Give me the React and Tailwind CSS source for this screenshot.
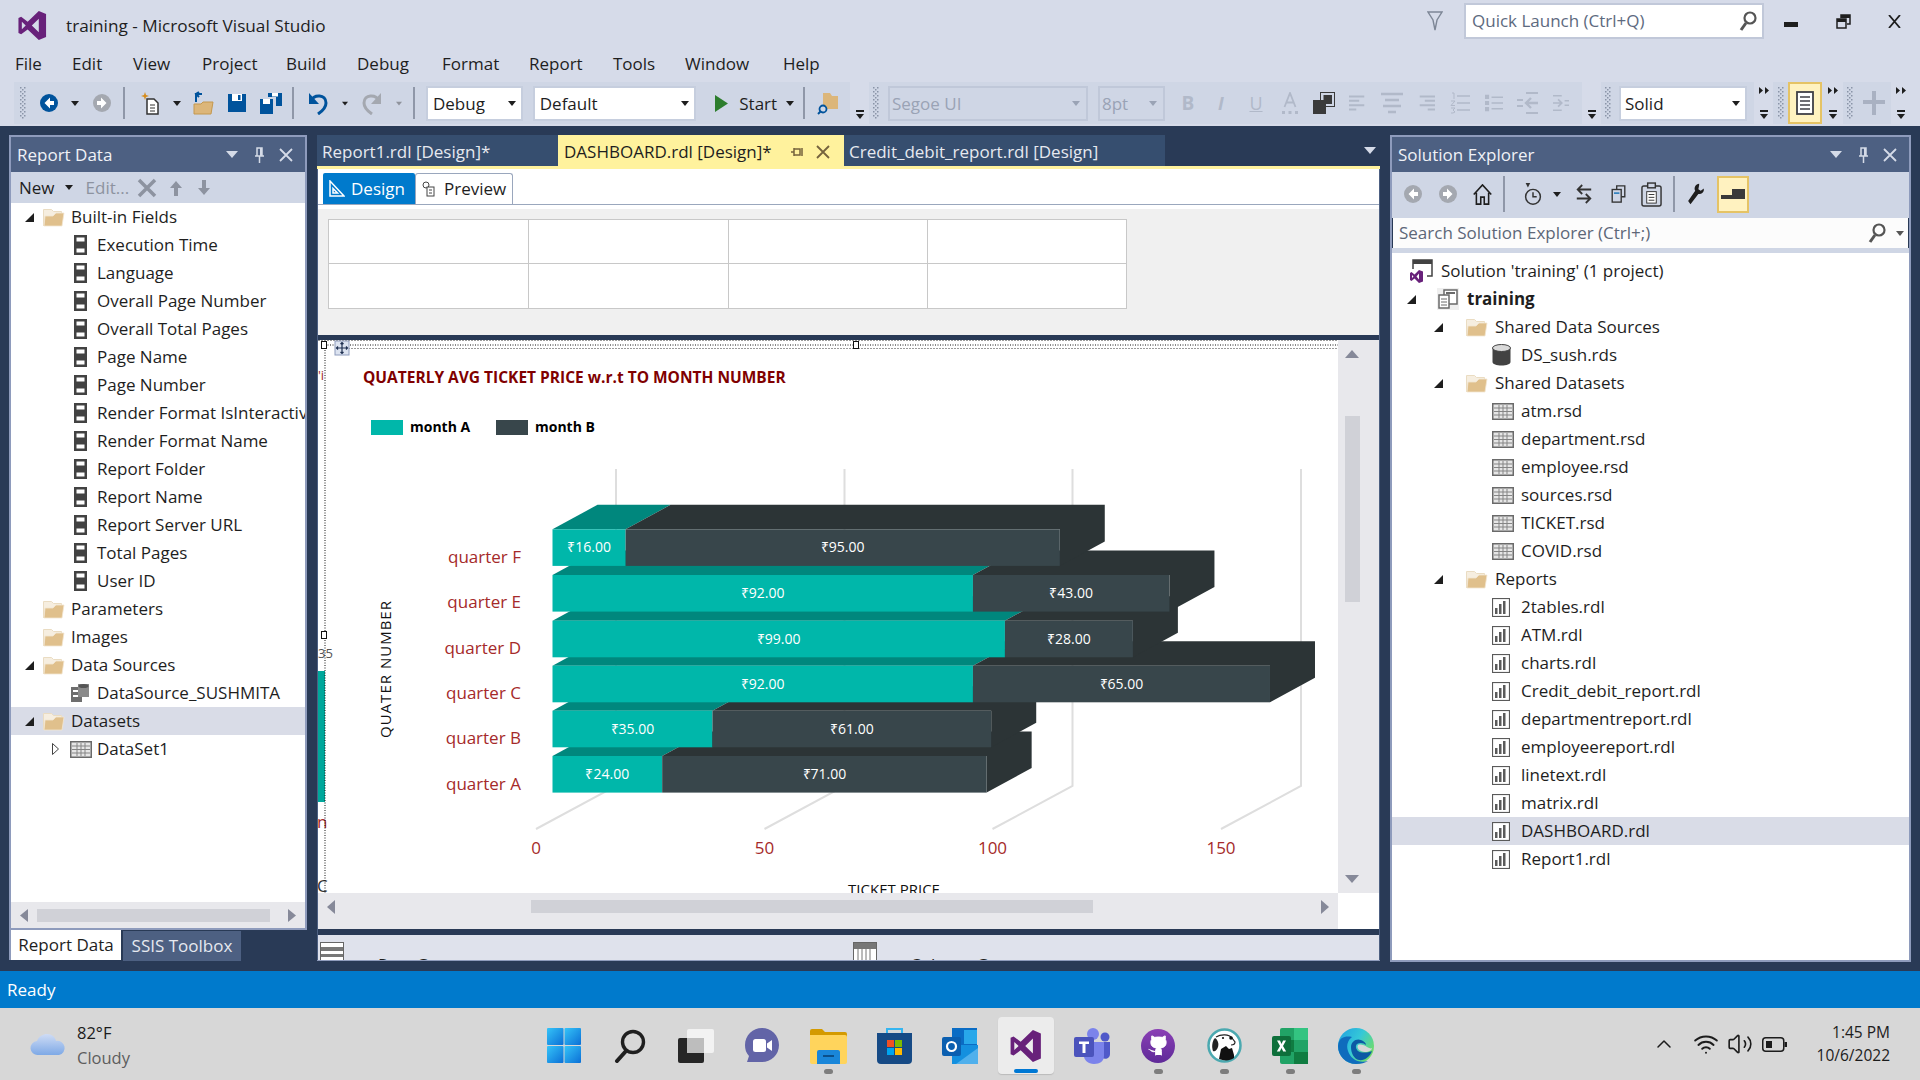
import React from 'react';
import { Github, Wifi, ChevronUp, Volume2 } from 'lucide-react';

const Caret = ({ className = 'text-[#1e1e1e]' }) => (
  <svg width="8" height="5" viewBox="0 0 8 5" className={className}><path d="M0 0h8L4 5z" fill="currentColor" /></svg>
);

const VsLogo = ({ size = 31, color = '#68217a' }) => (
  <svg width={size} height={size} viewBox="0 0 32 32">
    <path fillRule="evenodd" fill={color} d="M22.5 1 30 4.2v23.6L22.5 31 11 20l-6.7 5L1.5 23.8V8.2L4.3 7 11 12zM22.5 9 15.3 16l7.2 7zM5 12.2v7.6L9 16z" />
  </svg>
);

const Grip = () => (
  <svg width="6" height="32" viewBox="0 0 6 32"><g fill="#8a94a8">{[0, 4, 8, 12, 16, 20, 24, 28].map((y) => (<g key={y}><rect x="0" y={y} width="1.5" height="1.5" /><rect x="4" y={y} width="1.5" height="1.5" /><rect x="2" y={y + 2} width="1.5" height="1.5" /></g>))}</g></svg>
);

const Sep = ({ className = 'h-[32px]' }) => <div className={`w-[2px] bg-[#8f97a8] ${className}`} />;

const Overflow = ({ arrows, className }) => (
  <div className={`flex flex-col items-center justify-between py-[5px] h-full ${className}`}>
    {arrows ? (
      <svg width="10" height="7" viewBox="0 0 10 7"><path d="M0 0l4 3.500L0 7zM6 0l4 3.500L6 7z" fill="#1e1e1e" /></svg>
    ) : <span className="h-[7px]" />}
    <span className="flex flex-col items-center gap-[2px]">
      <span className="w-[8px] h-[2px] bg-[#1e1e1e]" />
      <Caret className="text-[#1e1e1e]" />
    </span>
  </div>
);

const CircleArrow = ({ color, dir = 'left' }) => (
  <svg width="20" height="20" viewBox="0 0 20 20"><circle cx="10" cy="10" r="9" fill={color} /><path d={dir === 'left' ? 'M11 4.5 5.5 10l5.5 5.5V12h4V8h-4z' : 'M9 4.5 14.5 10 9 15.5V12H5V8h4z'} fill="#fff" /></svg>
);

const Folder = () => (
  <svg width="23" height="20" viewBox="0 0 23 20">
    <path d="M1.500 19V2.500h8l2 2h8V8" fill="#f6eee0" stroke="#eadcc2" />
    <path d="M2 19 3 9h8l3-3h8l-2 13z" fill="#e0c08c" stroke="#f2e6d2" strokeWidth=".8" />
  </svg>
);

const FieldIcon = () => (
  <svg width="13" height="20" viewBox="0 0 13 20"><rect width="13" height="20" fill="#424242" /><rect x="2.500" y="2.500" width="8" height="4" fill="#fff" /><rect x="2.500" y="13.500" width="8" height="4" fill="#fff" /></svg>
);

const DataSourceIcon = () => (
  <svg width="20" height="20" viewBox="0 0 20 20"><rect x="1" y="4" width="11" height="15" fill="#6e6e6e" /><rect x="3" y="7" width="7" height="2" fill="#fff" /><rect x="3" y="12" width="7" height="2" fill="#fff" /><rect x="8" y="1" width="11" height="13" fill="#8a8a8a" /><ellipse cx="13.500" cy="3" rx="5" ry="2" fill="#555" /></svg>
);

const GridIcon = () => (
  <svg width="22" height="17" viewBox="0 0 22 17"><rect x=".75" y=".75" width="20.500" height="15.500" fill="#e6e6e6" stroke="#6a6a6a" strokeWidth="1.500" /><path d="M2 5h18M2 8.500h18M2 12h18M7 2v13M11 2v13M15 2v13" stroke="#858585" /></svg>
);

const ReportIcon = () => (
  <svg width="18" height="19" viewBox="0 0 18 19"><rect x=".5" y=".5" width="17" height="18" fill="#fff" stroke="#5a5a5a" strokeWidth="1.200" /><rect x="3" y="10" width="2.500" height="6" fill="#5a5a5a" /><rect x="7" y="6" width="2.500" height="10" fill="#5a5a5a" /><rect x="11" y="3" width="2.500" height="13" fill="#5a5a5a" /></svg>
);

const CylinderIcon = () => (
  <svg width="19" height="22" viewBox="0 0 19 22"><path d="M.5 4v14c0 2 4 3.500 9 3.500s9-1.500 9-3.500V4z" fill="#424242" /><ellipse cx="9.500" cy="4" rx="9" ry="3.500" fill="#d9d9d9" stroke="#424242" /></svg>
);

const SolutionIcon = () => (
  <svg width="23" height="24" viewBox="0 0 23 24"><path d="M3 10V1h19v16h-5" fill="#fff" stroke="#424242" strokeWidth="1.500" /><rect x="3" y="1" width="19" height="4" fill="#424242" /><g transform="translate(0 11)"><path fillRule="evenodd" fill="#68217a" d="M9 0l4 1.500v10L9 13 4.500 8.500 1.500 11 0 10V3l1.500-1 3 2.500zM9 3.500 6.500 6.500 9 9.500zM2 5v3l1.500-1.500z" /></g></svg>
);

const ProjectIcon = () => (
  <svg width="22" height="22" viewBox="0 0 22 22"><rect width="22" height="22" fill="#efefef" /><rect x="7" y="2" width="13" height="14" fill="#fff" stroke="#6a6a6a" strokeWidth="1.500" /><path d="M9 5h9" stroke="#6a6a6a" strokeWidth="2" /><rect x="2" y="7" width="10" height="13" fill="#fff" stroke="#6a6a6a" strokeWidth="1.500" /><path d="M4 11h6M4 14h6M4 17h6" stroke="#6a6a6a" /></svg>
);

const Arrow = ({ open = true }) => open ? (
  <svg width="9" height="9" viewBox="0 0 9 9"><path d="M0 9h9V0z" fill="#1e1e1e" /></svg>
) : (
  <svg width="7" height="12" viewBox="0 0 7 12"><path d="M.5.500 6.500 6 .5 11.500z" fill="#fff" stroke="#444" /></svg>
);

const ROW_STYLES = {
  lFolderArrow: ['pl-[14px]', 'w-[17px]', 'w-[29px]'],
  lFolder: ['pl-[31px]', '', 'w-[29px]'],
  lField: ['pl-[63px]', '', 'w-[23px]'],
  lSource: ['pl-[59px]', '', 'w-[27px]'],
  lSet: ['pl-[41px]', 'w-[18px]', 'w-[27px]'],
  rSolution: ['pl-[18px]', '', 'w-[31px]'],
  rProject: ['pl-[15px]', 'w-[30px]', 'w-[30px]'],
  rFolder: ['pl-[42px]', 'w-[31px]', 'w-[30px]'],
  rItem: ['pl-[100px]', '', 'w-[29px]'],
};

const TreeRow = ({ kind, icon, text, selected, arrow, bold }) => {
  const [pad, arrowW, iconW] = ROW_STYLES[kind];
  return (
    <div className={`h-[28px] flex items-center whitespace-nowrap overflow-hidden ${pad} ${selected ? 'bg-[#d9dce7]' : ''}`}>
      {arrowW && <span className={`${arrowW} shrink-0 flex`}>{arrow}</span>}
      <span className={`${iconW} shrink-0 flex items-center`}>{icon}</span>
      <span className={bold ? 'font-bold' : ''}>{text}</span>
    </div>
  );
};

const builtIn = ['Execution Time', 'Language', 'Overall Page Number', 'Overall Total Pages', 'Page Name', 'Page Number', 'Render Format IsInteractive', 'Render Format Name', 'Report Folder', 'Report Name', 'Report Server URL', 'Total Pages', 'User ID'];
const rsds = ['atm.rsd', 'department.rsd', 'employee.rsd', 'sources.rsd', 'TICKET.rsd', 'COVID.rsd'];
const rdls = ['2tables.rdl', 'ATM.rdl', 'charts.rdl', 'Credit_debit_report.rdl', 'departmentreport.rdl', 'employeereport.rdl', 'linetext.rdl', 'matrix.rdl', 'DASHBOARD.rdl', 'Report1.rdl'];

const PanelTitle = ({ title }) => (
  <div className="h-[35px] bg-[#4d6082] flex items-center text-[#f0f2f7] text-[17px] pl-[6px] pr-[12px] shrink-0">
    <span className="flex-1">{title}</span>
    <svg width="12" height="7" viewBox="0 0 12 7" className="mr-[16px]"><path d="M0 0h12L6 7z" fill="#d5dbe8" /></svg>
    <svg width="11" height="16" viewBox="0 0 11 16"><path d="M3 1h5v8H3zM1 9h9M5.500 9v7" fill="none" stroke="#d5dbe8" strokeWidth="1.500" /><rect x="6" y="1" width="2" height="8" fill="#d5dbe8" /></svg>
    <svg width="14" height="14" viewBox="0 0 14 14" className="ml-[14px]"><path d="M1 1l12 12M13 1 1 13" stroke="#d5dbe8" strokeWidth="1.800" /></svg>
  </div>
);

const DIS = '#b1b9c9';
const AlignIcon = ({ d }) => (
  <svg width="22" height="22" viewBox="0 0 22 22"><path d={d} stroke={DIS} strokeWidth="2.600" fill="none" /></svg>
);

const Toolbar = () => (
  <div className="h-[42px] flex items-stretch pl-[14px] text-[17px] text-[#1e1e1e]">
    <div className="w-[836px] bg-[#cfd6e5] flex items-center shrink-0">
      <div className="w-[18px] flex justify-center"><Grip /></div>
      <div className="w-[34px] flex justify-center"><CircleArrow color="#00539c" /></div>
      <div className="w-[18px] flex justify-center"><Caret /></div>
      <div className="w-[36px] flex justify-center"><CircleArrow color="#a4a8b0" dir="right" /></div>
      <div className="w-[8px] flex justify-center"><Sep /></div>
      <div className="w-[44px] flex justify-center">
        <svg width="20" height="24" viewBox="0 0 20 24"><path d="M5 1l1 3 3 1-3 1-1 3-1-3-3-1 3-1z" fill="#d68b1a" /><path d="M7 8h7l4 4v11H7z" fill="#fff" stroke="#333" strokeWidth="1.500" /><path d="M10 14h5M10 17h5M10 20h5" stroke="#333" /></svg>
      </div>
      <div className="w-[10px] flex justify-center"><Caret /></div>
      <div className="w-[44px] flex justify-center">
        <svg width="24" height="24" viewBox="0 0 24 24"><path d="M2 13h7l2-2h10l-2 12H2z" fill="#dcb67a" stroke="#c4984f" /><path d="M4 11V3h6M7 1 4 3l3 3" fill="none" stroke="#00539c" strokeWidth="2" /></svg>
      </div>
      <div className="w-[24px] flex justify-center">
        <svg width="20" height="20" viewBox="0 0 20 20"><path d="M1 1h18v18H1z" fill="#00539c" /><rect x="5" y="1" width="10" height="7" fill="#fff" /><rect x="11" y="2" width="2.500" height="5" fill="#00539c" /></svg>
      </div>
      <div className="w-[43px] flex justify-center">
        <svg width="24" height="22" viewBox="0 0 24 22"><path d="M1 7h13v15H1z" fill="#00539c" /><rect x="4" y="7" width="7" height="5" fill="#fff" /><path d="M9 1h14v13h-6V5H9z" fill="#00539c" /><rect x="13" y="1" width="6" height="3.500" fill="#fff" /></svg>
      </div>
      <div className="w-[2px] flex justify-center"><Sep /></div>
      <div className="w-[48px] flex justify-center">
        <svg width="20" height="24" viewBox="0 0 20 24"><path d="M3 10c3-7 15-7 15 2 0 5-5 9-8 11" fill="none" stroke="#00539c" strokeWidth="3" /><path d="M1 2v11h10z" fill="#00539c" /></svg>
      </div>
      <div className="w-[6px] flex justify-center"><Caret /></div>
      <div className="w-[48px] flex justify-center">
        <svg width="20" height="24" viewBox="0 0 20 24"><path d="M17 10C14 3 2 3 2 12c0 5 5 9 8 11" fill="none" stroke="#a4a8b0" strokeWidth="3" /><path d="M19 2v11H9z" fill="#a4a8b0" /></svg>
      </div>
      <div className="w-[6px] flex justify-center"><Caret className="text-[#8f939c]" /></div>
      <div className="w-[11px]" /><Sep /><div className="w-[11px]" />
      <div className="w-[97px] h-[35px] bg-white border-2 border-[#c6cede] flex items-center pl-[5px] pr-[5px] justify-between"><span className="pt-[2px]">Debug</span><Caret /></div>
      <div className="w-[10px]" />
      <div className="w-[164px] h-[35px] bg-white border-2 border-[#c6cede] flex items-center pl-[5px] pr-[5px] justify-between"><span className="pt-[2px]">Default</span><Caret /></div>
      <div className="w-[19px]" />
      <svg width="13" height="17" viewBox="0 0 13 17"><path d="M0 0l13 8.500L0 17z" fill="#2d7d2d" /></svg>
      <div className="w-[11px]" />
      <span className="w-[45px] pt-[2px]">Start</span>
      <div className="w-[12px] flex justify-center"><Caret /></div>
      <div className="w-[7px]" /><Sep />
      <div className="w-[45px] flex justify-center">
        <svg width="22" height="24" viewBox="0 0 22 24"><path d="M6 2h7l2 3h6v13H6z" fill="#dcb67a" /><circle cx="6" cy="18" r="3.500" fill="#cfd6e5" stroke="#00539c" strokeWidth="1.800" /><path d="M3.500 20.500 1 23" stroke="#00539c" strokeWidth="2" /></svg>
      </div>
    </div>
    <div className="w-[19px] shrink-0"><Overflow /></div>
    <div className="w-[713px] bg-[#cfd6e5] flex items-center shrink-0 text-[#9aa3b5]">
      <div className="w-[14px] flex justify-center"><Grip /></div>
      <div className="w-[5px]" />
      <div className="w-[200px] h-[35px] border-2 border-[#c0c8d9] flex items-center pl-[2px] pr-[6px] justify-between"><span className="pt-[2px]">Segoe UI</span><Caret className="text-[#9aa3b5]" /></div>
      <div className="w-[10px]" />
      <div className="w-[67px] h-[35px] border-2 border-[#c0c8d9] flex items-center pl-[2px] pr-[6px] justify-between"><span className="pt-[2px]">8pt</span><Caret className="text-[#9aa3b5]" /></div>
      <div className="w-[46px] text-center font-bold text-[19px] text-[#b1b9c9]">B</div>
      <div className="w-[20px] text-center italic font-bold text-[18px] text-[#b1b9c9]">I</div>
      <div className="w-[50px] text-center underline text-[18px] text-[#b1b9c9]">U</div>
      <div className="w-[18px] flex justify-center">
        <svg width="18" height="22" viewBox="0 0 18 22"><path d="M3.500 15 9 1l5.500 14M5.500 10.500h7" fill="none" stroke={DIS} strokeWidth="1.800" /><path d="M1 19h3v3H1zM7.500 19h3v3h-3zM14 19h3v3h-3z" fill={DIS} /></svg>
      </div>
      <div className="w-[50px] flex justify-center">
        <svg width="22" height="22" viewBox="0 0 22 22"><rect y="8" width="13" height="14" fill="#3a3a3a" /><rect x="7.500" y=".5" width="14" height="14" fill="#cfd6e5" stroke="#3a3a3a" /><rect x="10.500" y="3" width="8.500" height="9" fill="#3a3a3a" /><rect y="8" width="13" height="14" fill="#3a3a3a" /></svg>
      </div>
      <div className="w-[16px] flex justify-center"><AlignIcon d="M0 2h21M0 8h14M0 14h21M0 20h10" /></div>
      <div className="w-[54px] flex justify-center"><AlignIcon d="M0 2h22M4 8h14M2 14h18M7 20h8" /></div>
      <div className="w-[16px] flex justify-center"><AlignIcon d="M1 2h21M8 8h14M1 14h21M12 20h10" /></div>
      <div className="w-[50px] flex justify-center">
        <svg width="20" height="22" viewBox="0 0 20 22"><path d="M7 4h13M7 11h13M7 18h13" stroke={DIS} strokeWidth="1.600" /><path d="M2 1h2v6M1 9h4l-4 4.500h4M1 16h4l-2 2 2 2-2 1H1" fill="none" stroke={DIS} strokeWidth="1" /></svg>
      </div>
      <div className="w-[18px] flex justify-center">
        <svg width="22" height="22" viewBox="0 0 22 22"><path d="M8 4h14M8 11h14M8 18h14" stroke={DIS} strokeWidth="1.600" /><path d="M0 1h5v5H0zM0 8.500h5v5H0zM0 16h5v5H0z" fill={DIS} /></svg>
      </div>
      <div className="w-[50px] flex justify-center">
        <svg width="22" height="22" viewBox="0 0 22 22"><path d="M9 1h12M0 8h6M0 14h6M9 21h12" stroke={DIS} strokeWidth="2" /><path d="M21 11H9M14 6l-5 5 5 5" fill="none" stroke={DIS} strokeWidth="2.400" /></svg>
      </div>
      <div className="w-[16px] flex justify-center">
        <svg width="22" height="22" viewBox="0 0 22 22"><path d="M0 1h12M16 8h6M16 14h6M0 21h12" stroke={DIS} strokeWidth="2" /><path d="M0 11h12M7 6l5 5-5 5" fill="none" stroke={DIS} strokeWidth="2.400" /></svg>
      </div>
    </div>
    <div className="w-[19px] shrink-0"><Overflow /></div>
    <div className="w-[153px] bg-[#cfd6e5] flex items-center shrink-0">
      <div className="w-[14px] flex justify-center"><Grip /></div>
      <div className="w-[4px]" />
      <div className="w-[128px] h-[35px] bg-white border-2 border-[#c6cede] flex items-center pl-[4px] pr-[5px] justify-between"><span className="pt-[2px]">Solid</span><Caret /></div>
    </div>
    <div className="w-[19px] shrink-0"><Overflow arrows /></div>
    <div className="w-[15px] bg-[#cfd6e5] flex items-center justify-center"><Grip /></div>
    <div className="w-[34px] bg-[#fff2c0] border-2 border-[#e5c365] flex items-center justify-center">
      <svg width="18" height="24" viewBox="0 0 18 24"><rect x="1" y="1" width="16" height="22" fill="#fff" stroke="#3f3f46" strokeWidth="1.800" /><path d="M4 6h10M4 10h10M4 14h10M4 18h10" stroke="#3f3f46" strokeWidth="1.500" /></svg>
    </div>
    <div className="w-[21px] shrink-0"><Overflow arrows /></div>
    <div className="w-[14px] bg-[#cfd6e5] flex items-center justify-center"><Grip /></div>
    <div className="w-[34px] bg-[#cfd6e5] flex items-center justify-center">
      <svg width="22" height="24" viewBox="0 0 22 24"><path d="M9 0h4v9h9v4h-9v11H9V13H0V9h9z" fill="#a9b1c2" /></svg>
    </div>
    <div className="w-[19px] shrink-0"><Overflow arrows /></div>
  </div>
);

const TitleBar = () => (
  <div className="h-[50px] flex items-start shrink-0 text-[#1e1e1e]">
    <div className="h-[50px] flex items-center pl-[17px]">
      <VsLogo />
      <span className="ml-[18px] text-[17.200px] pt-[2px]">training - Microsoft Visual Studio</span>
    </div>
    <div className="ml-auto h-[42px] flex items-center">
      <svg width="16" height="20" viewBox="0 0 16 20"><path d="M1 1h14l-5 8-2 10-2-10z" fill="none" stroke="#7d8696" strokeWidth="1.400" /></svg>
      <div className="ml-[21px] w-[300px] h-[36px] bg-white border-2 border-[#c1c8d9] flex items-center pl-[6px] pr-[5px] justify-between text-[17px] text-[#5d6a80]">
        <span>Quick Launch (Ctrl+Q)</span>
        <svg width="18" height="20" viewBox="0 0 18 20"><circle cx="11" cy="7" r="5.500" fill="none" stroke="#555" strokeWidth="2.200" /><path d="M7 12l-5 7" stroke="#555" strokeWidth="3" /></svg>
      </div>
      <div className="w-[54px] flex justify-center pt-[6px]"><div className="w-[14px] h-[5px] bg-[#1e1e1e]" /></div>
      <div className="w-[51px] flex justify-center">
        <svg width="15" height="15" viewBox="0 0 15 15"><path d="M5 4V1h9v9h-3" fill="none" stroke="#1e1e1e" strokeWidth="1.500" /><rect x="5" y="1" width="9" height="3" fill="#1e1e1e" /><rect x="1" y="5" width="9" height="9" fill="none" stroke="#1e1e1e" strokeWidth="1.500" /><rect x="1" y="5" width="9" height="3" fill="#1e1e1e" /></svg>
      </div>
      <div className="w-[51px] flex justify-center">
        <svg width="13" height="13" viewBox="0 0 13 13"><path d="M1 0l11 13M12 0 1 13" stroke="#1e1e1e" strokeWidth="1.800" /></svg>
      </div>
    </div>
  </div>
);

const menu = [['File', 'w-[57px]'], ['Edit', 'w-[61px]'], ['View', 'w-[69px]'], ['Project', 'w-[84px]'], ['Build', 'w-[71px]'], ['Debug', 'w-[85px]'], ['Format', 'w-[87px]'], ['Report', 'w-[84px]'], ['Tools', 'w-[72px]'], ['Window', 'w-[98px]'], ['Help', 'w-[60px]']];

const LeftPanel = () => (
  <div className="w-[298px] shrink-0 h-[826px] flex flex-col text-[#1e1e1e]">
    <div className="h-[795px] border-2 border-[#8e9bbc] flex flex-col bg-white overflow-hidden">
      <PanelTitle title="Report Data" />
      <div className="h-[31px] bg-[#cfd6e5] flex items-center pl-[8px] text-[17px] shrink-0">
        <span>New</span>
        <Caret className="ml-[10px] text-[#1e1e1e]" />
        <span className="ml-[13px] text-[#8d93a0]">Edit...</span>
        <svg width="20" height="20" viewBox="0 0 20 20" className="ml-[8px]"><path d="M2 2l16 16M18 2 2 18" stroke="#8d93a0" strokeWidth="3.500" /></svg>
        <svg width="14" height="16" viewBox="0 0 14 16" className="ml-[12px]"><path d="M7 1 1 8h4v8h4V8h4z" fill="#8d93a0" /></svg>
        <svg width="14" height="16" viewBox="0 0 14 16" className="ml-[14px]"><path d="M7 15 1 8h4V0h4v8h4z" fill="#8d93a0" /></svg>
      </div>
      <div className="flex-1 text-[17px] overflow-hidden">
        <TreeRow kind="lFolderArrow" arrow={<Arrow />} icon={<Folder />} text="Built-in Fields" />
        {builtIn.map((t) => <TreeRow key={t} kind="lField" icon={<FieldIcon />} text={t} />)}
        <TreeRow kind="lFolder" icon={<Folder />} text="Parameters" />
        <TreeRow kind="lFolder" icon={<Folder />} text="Images" />
        <TreeRow kind="lFolderArrow" arrow={<Arrow />} icon={<Folder />} text="Data Sources" />
        <TreeRow kind="lSource" icon={<DataSourceIcon />} text="DataSource_SUSHMITA" />
        <TreeRow kind="lFolderArrow" arrow={<Arrow />} icon={<Folder />} text="Datasets" selected />
        <TreeRow kind="lSet" arrow={<Arrow open={false} />} icon={<GridIcon />} text="DataSet1" />
      </div>
      <div className="h-[26px] bg-[#e8e8ec] flex items-center px-[9px] shrink-0">
        <svg width="8" height="13" viewBox="0 0 8 13"><path d="M8 0v13L0 6.500z" fill="#868999" /></svg>
        <div className="ml-[9px] w-[233px] h-[13px] bg-[#d0d1d7]" />
        <svg width="8" height="13" viewBox="0 0 8 13" className="ml-auto"><path d="M0 0v13l8-6.500z" fill="#868999" /></svg>
      </div>
    </div>
    <div className="h-[31px] flex text-[17px]">
      <div className="w-[112px] h-[30px] bg-white flex items-center justify-center border-l-2 border-[#8e9bbc]">Report Data</div>
      <div className="ml-[2px] mt-[1px] w-[118px] h-[30px] bg-[#4d6082] text-[#e6e9f0] flex items-center justify-center">SSIS Toolbox</div>
    </div>
  </div>
);

const rows = [
  { label: 'quarter F', y: 529.3, a: 16, b: 95, ly: 563 },
  { label: 'quarter E', y: 575, a: 92, b: 43, ly: 608 },
  { label: 'quarter D', y: 620.7, a: 99, b: 28, ly: 654 },
  { label: 'quarter C', y: 665.7, a: 92, b: 65, ly: 699 },
  { label: 'quarter B', y: 710.7, a: 35, b: 61, ly: 744 },
  { label: 'quarter A', y: 756, a: 24, b: 71, ly: 790 },
];
const X0 = 552.5, K = 4.57, DX = 45, DY = 24.5, H = 36.6;
const inr = (n) => `₹${n.toFixed(2)}`;
const axis = [[536, 616, '0'], [764.5, 844.5, '50'], [992.5, 1072.5, '100'], [1221, 1301, '150']];
const LABEL = "'Open Sans', sans-serif";

const Chart = () => (
  <svg viewBox="318 340 1020 553" width="1020" height="553" className="block">
    <rect x="318" y="340" width="1020" height="553" fill="#fff" />
    <rect x="318" y="671" width="7" height="131" fill="#00a79b" />
    <text x="318" y="658" fontSize="13" fill="#555" fontFamily={LABEL}>35</text>
    <text x="317" y="828" fontSize="17" fill="#a52a2a" fontFamily={LABEL}>n</text>
    <text x="317" y="892" fontSize="17" fill="#333" fontFamily={LABEL}>C</text>
    <text x="318" y="380" fontSize="13" fill="#a52a2a" fontFamily={LABEL}>'i</text>
    <path d="M318 340.500H1338M336 348.500H1338" stroke="#9a9a9a" strokeDasharray="2 1" />
    <path d="M325 345H1338M325 345V893" stroke="#111" strokeDasharray="1 1.500" />
    <text x="363" y="383" fontSize="15.500" fontWeight="700" fill="#800000" fontFamily={LABEL}>QUATERLY AVG TICKET PRICE w.r.t TO MONTH NUMBER</text>
    <rect x="371" y="420" width="32" height="15" fill="#00b7aa" />
    <text x="410" y="432" fontSize="14" fontWeight="700" fill="#000" fontFamily={LABEL}>month A</text>
    <rect x="496" y="420" width="32" height="15" fill="#38464b" />
    <text x="535" y="432" fontSize="14" fontWeight="700" fill="#000" fontFamily={LABEL}>month B</text>
    {axis.map(([x1, x2, t]) => (
      <g key={t}>
        <path d={`M${x2} 469V786L${x1} 829`} fill="none" stroke="#dedede" strokeWidth="2" />
        <text x={x1} y="854" fontSize="17" textAnchor="middle" fill="#a52a2a" fontFamily={LABEL}>{t}</text>
      </g>
    ))}
    {[...rows].reverse().map((r) => {
      const sx = X0 + r.a * K;
      const ex = sx + r.b * K;
      const t = r.y - DY;
      return (
        <g key={r.label}>
          <path d={`M${X0} ${r.y}L${X0 + DX} ${t}H${sx + DX}L${sx} ${r.y}z`} fill="#00877d" />
          <path d={`M${sx} ${r.y}L${sx + DX} ${t}H${ex + DX}V${t + H}L${ex} ${r.y + H}V${r.y}z`} fill="#2c3436" />
          <rect x={X0} y={r.y} width={sx - X0} height={H} fill="#00b7aa" />
          <rect x={sx} y={r.y} width={ex - sx} height={H} fill="#38464b" />
          <text x={(X0 + sx) / 2} y={r.y + 23} fontSize="14" textAnchor="middle" fill="#fff" fontFamily={LABEL}>{inr(r.a)}</text>
          <text x={(sx + ex) / 2} y={r.y + 23} fontSize="14" textAnchor="middle" fill="#fff" fontFamily={LABEL}>{inr(r.b)}</text>
          <text x="521" y={r.ly} fontSize="17" textAnchor="end" fill="#a52a2a" fontFamily={LABEL}>{r.label}</text>
        </g>
      );
    })}
    <text transform="translate(391 738) rotate(-90)" fontSize="15" fill="#111" fontFamily={LABEL} textLength="137">QUATER NUMBER</text>
    <text x="894" y="894.500" fontSize="15" textAnchor="middle" fill="#111" fontFamily={LABEL}>TICKET PRICE</text>
    <rect x="321.500" y="341.500" width="5" height="7" fill="#fff" stroke="#111" />
    <rect x="853.500" y="341.500" width="5" height="7" fill="#fff" stroke="#111" />
    <rect x="321.500" y="631.500" width="5" height="7" fill="#fff" stroke="#111" />
    <rect x="335" y="341" width="14" height="14" fill="#dce3f0" stroke="#8e9bbc" />
    <path d="M342 342.500v11M336.500 348h11M340.500 344l1.500-1.500 1.500 1.500M340.500 352l1.500 1.500 1.500-1.500M338 346.500 336.500 348l1.500 1.500M346 346.500l1.500 1.500-1.500 1.500" fill="none" stroke="#1e2f50" strokeWidth="1.200" />
  </svg>
);

const Document = () => (
  <div className="w-[1063px] h-[826px] shrink-0 flex flex-col text-[17px]">
    <div className="h-[31px] flex items-stretch text-[#e6e9f0] shrink-0">
      <div className="w-[241px] bg-[#364e6f] flex items-center pl-[5px] pt-[2px]">Report1.rdl [Design]*</div>
      <div className="w-[286px] bg-[#fff29d] text-[#1e1e1e] flex items-center pl-[6px] pt-[2px]">
        <span>DASHBOARD.rdl [Design]*</span>
        <svg width="12" height="12" viewBox="0 0 12 12" className="ml-[19px]"><path d="M3 2v8M3 6H0M3 3h6v6H3M11 2v8" fill="none" stroke="#75633d" strokeWidth="1.500" /></svg>
        <svg width="14" height="14" viewBox="0 0 14 14" className="ml-[13px]"><path d="M1 1l12 12M13 1 1 13" stroke="#75633d" strokeWidth="1.800" /></svg>
      </div>
      <div className="w-[321px] bg-[#364e6f] flex items-center pl-[5px] pt-[2px]">Credit_debit_report.rdl [Design]</div>
      <div className="flex-1 flex items-center justify-end pr-[4px]"><svg width="12" height="7" viewBox="0 0 12 7"><path d="M0 0h12L6 7z" fill="#d5dbe8" /></svg></div>
    </div>
    <div className="h-[3px] bg-[#fff29d] shrink-0" />
    <div className="flex-1 flex flex-col border-x border-[#4d6082] bg-white overflow-hidden min-h-0">
      <div className="h-[36px] flex items-end pl-[5px] border-b border-[#9aa7bd] shrink-0 text-[#1e1e1e]">
        <div className="w-[92px] h-[31px] bg-[#007acc] text-white flex items-center pl-[6px] gap-[6px] rounded-t-[2px]">
          <svg width="16" height="17" viewBox="0 0 16 17"><path d="M1 1l14 15H1zM4 8.500V13h4.500z" fill="none" stroke="#fff" strokeWidth="1.500" /></svg>
          <span>Design</span>
        </div>
        <div className="w-[98px] h-[31px] border border-b-0 border-[#9aa7bd] rounded-t-[3px] flex items-center pl-[5px] gap-[9px]">
          <svg width="14" height="16" viewBox="0 0 14 16"><circle cx="5" cy="4" r="3" fill="none" stroke="#444" /><rect x="6" y="6" width="7" height="9" fill="#fff" stroke="#444" /><path d="M8 9h3M8 12h3" stroke="#444" /></svg>
          <span>Preview</span>
        </div>
      </div>
      <div className="h-[4px] shrink-0" />
      <div className="h-[126px] bg-[#f0f0f0] pt-[10px] pl-[10px] shrink-0">
        <div className="w-[799px] h-[90px] grid grid-cols-4 grid-rows-2 bg-white border border-[#c8c8c8]">
          {[0, 1, 2, 3, 4, 5, 6, 7].map((i) => (
            <div key={i} className={`border-[#c8c8c8] ${i < 4 ? 'border-b' : ''} ${i % 4 ? 'border-l' : ''}`} />
          ))}
        </div>
      </div>
      <div className="h-[5px] bg-[#293a56] shrink-0" />
      <div className="flex h-[589px] shrink-0">
        <div className="w-[1020px] flex flex-col">
          <div className="h-[553px] overflow-hidden"><Chart /></div>
          <div className="h-[36px] bg-[#e8e8ec] flex items-start pt-[7px] px-[9px]">
            <svg width="8" height="14" viewBox="0 0 8 14"><path d="M8 0v14L0 7z" fill="#868999" /></svg>
            <div className="ml-[196px] w-[562px] h-[13px] bg-[#d0d1d7]" />
            <svg width="8" height="14" viewBox="0 0 8 14" className="ml-auto"><path d="M0 0v14l8-7z" fill="#868999" /></svg>
          </div>
        </div>
        <div className="flex-1 flex flex-col">
          <div className="h-[553px] bg-[#e8e8ec] flex flex-col items-start pl-[7px] py-[10px]">
            <svg width="14" height="8" viewBox="0 0 14 8"><path d="M0 8h14L7 0z" fill="#868999" /></svg>
            <div className="mt-[58px] w-[15px] h-[186px] bg-[#d0d1d7]" />
            <svg width="14" height="8" viewBox="0 0 14 8" className="mt-auto"><path d="M0 0h14L7 8z" fill="#868999" /></svg>
          </div>
          <div className="flex-1 bg-white" />
        </div>
      </div>
      <div className="h-[6px] bg-[#293a56] shrink-0" />
      <div className="flex-1 bg-[#dfe2ec] flex overflow-hidden text-[#1e1e1e] min-h-0">
        <div className="w-[535px] flex pl-[2px] pt-[7px] h-[60px]">
          <svg width="24" height="30" viewBox="0 0 24 30"><rect x=".5" y=".5" width="23" height="29" fill="#fff" stroke="#666" /><path d="M1 5h22v4H1zM1 12h22v3H1z" fill="#777" /></svg>
          <span className="ml-[34px] mt-[10px]">Row Groups</span>
        </div>
        <div className="flex pt-[7px] h-[60px]">
          <svg width="24" height="30" viewBox="0 0 24 30"><rect x=".5" y=".5" width="23" height="29" fill="#fff" stroke="#666" /><rect x="1" y="1" width="22" height="6" fill="#777" /><path d="M5 7v22M9 7v22M13 7v22M17 7v22" stroke="#777" /></svg>
          <span className="ml-[33px] mt-[10px]">Column Groups</span>
        </div>
      </div>
    </div>
    <div className="h-[1px] bg-[#8e9bbc] shrink-0" />
  </div>
);

const ToolBtn = ({ className, children }) => <div className={`flex justify-center shrink-0 ${className}`}>{children}</div>;

const RightPanel = () => (
  <div className="w-[521px] shrink-0 h-[827px] border-2 border-[#8e9bbc] flex flex-col text-[#1e1e1e]">
    <PanelTitle title="Solution Explorer" />
    <div className="h-[44px] bg-[#cfd6e5] flex items-center pl-[2px] shrink-0">
      <ToolBtn className="w-[38px]"><CircleArrow color="#a4a8b0" /></ToolBtn>
      <ToolBtn className="w-[32px]"><CircleArrow color="#a4a8b0" dir="right" /></ToolBtn>
      <ToolBtn className="w-[36px]">
        <svg width="21" height="21" viewBox="0 0 22 24"><path d="M1 12 11 1l10 11M4 10v13h5v-8h4v8h5V10" fill="none" stroke="#1e1e1e" strokeWidth="1.800" /></svg>
      </ToolBtn>
      <div className="ml-[3px] w-[2px] h-[36px] bg-[#8f97a8]" />
      <ToolBtn className="ml-[8px] w-[40px]">
        <svg width="20" height="24" viewBox="0 0 20 26"><path d="M2 1l5 0-2.500 5z" fill="#333" /><circle cx="10" cy="16" r="8" fill="none" stroke="#333" strokeWidth="1.600" /><path d="M10 11v5h4" fill="none" stroke="#333" strokeWidth="1.600" /></svg>
      </ToolBtn>
      <Caret />
      <ToolBtn className="w-[46px]">
        <svg width="18" height="22" viewBox="0 0 20 24"><path d="M18 7H4M8 2 3 7l5 5M2 17h14M12 12l5 5-5 5" fill="none" stroke="#333" strokeWidth="2" /></svg>
      </ToolBtn>
      <ToolBtn className="w-[22px]">
        <svg width="15" height="18" viewBox="0 0 16 20"><path d="M6 5V1h9v12h-4" fill="none" stroke="#333" strokeWidth="1.500" /><rect x="1" y="5" width="10" height="14" fill="#cfd6e5" stroke="#333" strokeWidth="1.500" /><path d="M3 9h6" stroke="#0a6cb3" strokeWidth="1.500" /></svg>
      </ToolBtn>
      <ToolBtn className="w-[44px]">
        <svg width="21" height="25" viewBox="0 0 22 26"><rect x="1" y="4" width="20" height="21" rx="2" fill="none" stroke="#333" strokeWidth="1.500" /><rect x="7" y="1" width="8" height="5" fill="#cfd6e5" stroke="#333" strokeWidth="1.500" /><rect x="6" y="10" width="10" height="12" fill="#fff" stroke="#333" /><path d="M8 13h6M8 16h6M8 19h6" stroke="#333" /></svg>
      </ToolBtn>
      <div className="w-[2px] h-[36px] bg-[#8f97a8]" />
      <ToolBtn className="w-[42px]">
        <svg width="20" height="22" viewBox="0 0 22 28"><path d="M15 1a6 6 0 0 0-5 9L1 23l3 4 10-13a6 6 0 0 0 7-7l-4 3-3-2 1-5z" fill="#1e1e1e" /></svg>
      </ToolBtn>
      <div className="w-[32px] h-[37px] bg-[#fff2c0] border-2 border-[#e5c365] flex items-center justify-center">
        <svg width="24" height="10" viewBox="0 0 24 10"><path d="M11 0h13v10H0V6h11z" fill="#3a3a3a" /></svg>
      </div>
    </div>
    <div className="h-[2px] bg-[#cfd6e5] shrink-0" />
    <div className="h-[30px] mx-[1px] bg-[#fcfcfc] flex items-center pl-[6px] text-[17px] text-[#5d6778] shrink-0">
      <span className="flex-1">Search Solution Explorer (Ctrl+;)</span>
      <svg width="18" height="20" viewBox="0 0 18 20"><circle cx="11" cy="7" r="5.500" fill="none" stroke="#555" strokeWidth="2.200" /><path d="M7 12l-5 7" stroke="#555" strokeWidth="3" /></svg>
      <Caret className="ml-[10px] mr-[4px] text-[#555]" />
    </div>
    <div className="h-[5px] bg-[#cfd6e5] shrink-0" />
    <div className="flex-1 bg-white pt-[4px] text-[17px] overflow-hidden">
      <TreeRow kind="rSolution" icon={<SolutionIcon />} text="Solution 'training' (1 project)" />
      <TreeRow kind="rProject" arrow={<Arrow />} icon={<ProjectIcon />} text="training" bold />
      <TreeRow kind="rFolder" arrow={<Arrow />} icon={<Folder />} text="Shared Data Sources" />
      <TreeRow kind="rItem" icon={<CylinderIcon />} text="DS_sush.rds" />
      <TreeRow kind="rFolder" arrow={<Arrow />} icon={<Folder />} text="Shared Datasets" />
      {rsds.map((t) => <TreeRow key={t} kind="rItem" icon={<GridIcon />} text={t} />)}
      <TreeRow kind="rFolder" arrow={<Arrow />} icon={<Folder />} text="Reports" />
      {rdls.map((t) => <TreeRow key={t} kind="rItem" icon={<ReportIcon />} text={t} selected={t === 'DASHBOARD.rdl'} />)}
    </div>
  </div>
);

const taskIcons = [
  { id: 'start', icon: (
    <svg width="34" height="35" viewBox="0 0 34 35"><defs><linearGradient id="win" x1="0" y1="0" x2="1" y2="1"><stop offset="0" stopColor="#35c4f8" /><stop offset="1" stopColor="#0b6fd6" /></linearGradient></defs><rect width="16.500" height="17" rx="1" fill="url(#win)" /><rect x="17.500" width="16.500" height="17" rx="1" fill="url(#win)" /><rect y="18" width="16.500" height="17" rx="1" fill="url(#win)" /><rect x="17.500" y="18" width="16.500" height="17" rx="1" fill="url(#win)" /></svg>
  ) },
  { id: 'search', icon: (
    <svg width="32" height="34" viewBox="0 0 32 34"><circle cx="19" cy="13" r="10.500" fill="none" stroke="#1f1f1f" strokeWidth="3.400" /><path d="M12 22 3 32" stroke="#1f1f1f" strokeWidth="4" strokeLinecap="round" /></svg>
  ) },
  { id: 'tasks', icon: (
    <svg width="36" height="34" viewBox="0 0 36 34"><rect x="9" width="27" height="24" rx="2" fill="#f2f2f2" /><rect y="9" width="26" height="25" rx="2" fill="#262626" /><rect x="9" y="9" width="17" height="15" fill="#bdbdbd" /></svg>
  ) },
  { id: 'chat', icon: (
    <svg width="34" height="36" viewBox="0 0 34 36"><path d="M17 0c9 0 17 7 17 17s-8 17-17 17H2l2-6C1 25 0 21 0 17 0 7 8 0 17 0z" fill="#6264a7" /><rect x="8" y="11" width="13" height="13" rx="2.500" fill="#fff" /><path d="M22 15.500 27 12v11l-5-3.500z" fill="#fff" /></svg>
  ) },
  { id: 'files', dot: true, icon: (
    <svg width="37" height="36" viewBox="0 0 37 36"><path d="M0 3a2 2 0 0 1 2-2h10l3 3h20a2 2 0 0 1 2 2v4H0z" fill="#d49a00" /><path d="M0 7h35a2 2 0 0 1 2 2v25a2 2 0 0 1-2 2H2a2 2 0 0 1-2-2z" fill="#ffd45c" /><path d="M7 36V24a2 2 0 0 1 2-2h19a2 2 0 0 1 2 2v12z" fill="#1a86d9" /><rect x="13" y="27" width="11" height="2" fill="#0b4f8a" /></svg>
  ) },
  { id: 'store', icon: (
    <svg width="35" height="36" viewBox="0 0 35 36"><path d="M10 5V1h15v4" fill="none" stroke="#35b5f0" strokeWidth="2" /><path d="M0 5h35v27a4 4 0 0 1-4 4H4a4 4 0 0 1-4-4z" fill="#164a85" /><rect x="10" y="12" width="7" height="7" fill="#f25022" /><rect x="18" y="12" width="7" height="7" fill="#7fba00" /><rect x="10" y="20" width="7" height="7" fill="#00a4ef" /><rect x="18" y="20" width="7" height="7" fill="#ffb900" /></svg>
  ) },
  { id: 'outlook', icon: (
    <svg width="36" height="36" viewBox="0 0 36 36"><rect x="10" width="25" height="20" fill="#0a6cc4" /><rect x="22" y="2" width="13" height="14" fill="#28a8ea" /><path d="M10 17h26v19H10z" fill="#1490df" /><path d="M14 36 36 20v16z" fill="#50b0ec" /><rect y="9" width="19" height="19" rx="2" fill="#0b5fb0" /><circle cx="9.500" cy="18.500" r="4.500" fill="none" stroke="#fff" strokeWidth="2.200" /></svg>
  ) },
  { id: 'vs', active: true, icon: <VsLogo size={34} /> },
  { id: 'teams', icon: (
    <svg width="36" height="36" viewBox="0 0 36 36"><circle cx="19" cy="6" r="6" fill="#7b83eb" /><circle cx="31" cy="9" r="4.500" fill="#5059c9" /><path d="M26 14h10v12c0 4-4 6-8 4z" fill="#5059c9" /><path d="M10 14h20v14c0 5-4 8-10 8s-10-4-10-8z" fill="#7b83eb" /><rect y="9" width="20" height="20" rx="2" fill="#4b53bc" /><path d="M5 13.500h10v2.500h-3.500v9h-3v-9H5z" fill="#fff" /></svg>
  ) },
  { id: 'github', dot: true, icon: (
    <div className="w-[34px] h-[34px] rounded-full bg-gradient-to-b from-[#8a3fb5] to-[#5f2a98] flex items-center justify-center"><Github size={23} color="#fff" fill="#fff" strokeWidth={1} /></div>
  ) },
  { id: 'dog', dot: true, icon: (
    <svg width="35" height="35" viewBox="0 0 35 35"><circle cx="17.500" cy="17.500" r="16" fill="#fff" stroke="#4ba9b0" strokeWidth="2.500" /><path d="M8 10c-3 3-3.500 9-2 13 2 1 4-1 5-4 1-3 0-7-3-9z" fill="#222" /><path d="M9 9c5-3 13-3 16 1l3 4c0 2-2 3-4 3" fill="none" stroke="#222" strokeWidth="1.200" /><path d="M12 31l2-10 5-3 3 3 3-1 2 7 0 3c-4 3-10 3-15 1z" fill="#111" /><circle cx="24" cy="10" r="1.800" fill="#111" /><circle cx="16" cy="10" r="1.100" fill="#111" /></svg>
  ) },
  { id: 'excel', dot: true, icon: (
    <svg width="36" height="36" viewBox="0 0 36 36"><rect x="8" width="28" height="36" rx="2" fill="#21a366" /><rect x="22" width="14" height="12" fill="#33c481" /><rect x="8" y="12" width="14" height="12" fill="#107c41" /><rect x="22" y="24" width="14" height="12" fill="#107c41" /><rect y="8" width="19" height="20" rx="2" fill="#0e6f3b" /><path d="M5 12.500h3l1.500 3.500 1.600-3.500h2.900L11 18l3.200 5.500h-3L9.500 20l-1.700 3.500h-3L8 18z" fill="#fff" /></svg>
  ) },
  { id: 'edge', dot: true, icon: (
    <svg width="36" height="36" viewBox="0 0 36 36"><defs><linearGradient id="edge" x1="0" y1="0" x2="1" y2=".6"><stop offset="0" stopColor="#1f9fe0" /><stop offset=".55" stopColor="#35c8d8" /><stop offset="1" stopColor="#6fdc6a" /></linearGradient></defs><circle cx="18" cy="18" r="18" fill="url(#edge)" /><path d="M0 18C1 8 9 8 14 9c-4 3-6 8-4 14 2 7 10 13 20 10-3 2-7 3-12 3C8 36 0 28 0 18z" fill="#0f6cbd" /><path d="M13 19c0-5 5-9 10-7 3 1 5 3 5 5-2-2-6-3-9-1-2 2-1 5 1 7 3 2 9 2 14 0-2 6-8 10-13 9-5-1-8-7-8-13z" fill="#0c59a4" /><path d="M20 17c2-1 7 0 9 2 2 1 4 2 5 1 0 2-3 4-7 4-5 0-9-4-7-7z" fill="#d7d7d7" /></svg>
  ) },
];

const Taskbar = () => (
  <div className="h-[72px] bg-[#d7d7d7] grid grid-cols-[1fr_auto_1fr] items-stretch shrink-0 text-[#1c1c1c]">
    <div className="flex items-center pl-[30px]">
      <svg width="36" height="23" viewBox="0 0 36 23"><defs><linearGradient id="cl" x1="0" y1="0" x2="0" y2="1"><stop offset="0" stopColor="#cfdcf5" /><stop offset="1" stopColor="#7ea9e6" /></linearGradient></defs><path d="M8 22a7 7 0 0 1-1-14c2-5 6-7 10-7 5 0 8 3 9 7a7 7 0 0 1 3 14z" fill="url(#cl)" /></svg>
      <div className="ml-[11px] text-[16.500px] leading-[25px] pt-[2px]">
        <div>82°F</div>
        <div className="text-[#5d5d5d]">Cloudy</div>
      </div>
    </div>
    <div className="flex items-start pt-[9px]">
      {taskIcons.map((t) => (
        <div key={t.id} className={t.active
          ? 'relative w-[56px] mx-[5px] h-[57px] flex items-center justify-center bg-[#ececec] rounded-[4px] shadow-[0_1px_1px_#bbb]'
          : 'relative w-[66px] h-[57px] flex items-center justify-center'}>
          {t.icon}
          {t.dot && <span className="absolute bottom-0 left-1/2 -ml-[4px] w-[9px] h-[5px] rounded-full bg-[#7d7d7d]" />}
          {t.active && <span className="absolute bottom-[1px] left-1/2 -ml-[12px] w-[24px] h-[4px] rounded-full bg-[#0078d4]" />}
        </div>
      ))}
    </div>
    <div className="flex items-center justify-end pr-[30px]">
      <ChevronUp size={24} strokeWidth={1.500} className="mr-[17px]" />
      <Wifi size={26} strokeWidth={1.800} className="mr-[8px]" />
      <Volume2 size={26} strokeWidth={1.500} className="mr-[9px]" />
      <svg width="25" height="15" viewBox="0 0 25 15" className="mr-[30px]"><rect x=".75" y=".75" width="21" height="13.500" rx="3" fill="none" stroke="#1c1c1c" strokeWidth="1.500" /><rect x="4" y="4" width="6" height="7" fill="#1c1c1c" /><rect x="22.500" y="5" width="2.500" height="5" fill="#1c1c1c" /></svg>
      <div className="text-right text-[15.500px] leading-[23px]">
        <div>1:45 PM</div>
        <div>10/6/2022</div>
      </div>
    </div>
  </div>
);

const App = () => (
  <div className="w-[1920px] h-[1080px] overflow-hidden flex flex-col bg-[#293a56] font-['Open_Sans',sans-serif]">
    <div className="h-[126px] bg-[#d6dbe9] shrink-0 flex flex-col">
      <TitleBar />
      <div className="h-[32px] flex items-center pl-[15px] pb-[4px] text-[17px] text-[#1e1e1e]">
        {menu.map(([m, w]) => <span key={m} className={w}>{m}</span>)}
      </div>
      <Toolbar />
    </div>
    <div className="h-[845px] shrink-0 flex pl-[9px] pt-[9px] gap-[10px] overflow-hidden">
      <LeftPanel />
      <Document />
      <RightPanel />
    </div>
    <div className="h-[37px] bg-[#007acc] text-white text-[17px] flex items-center pl-[7px] shrink-0">Ready</div>
    <Taskbar />
  </div>
);

export default App;
